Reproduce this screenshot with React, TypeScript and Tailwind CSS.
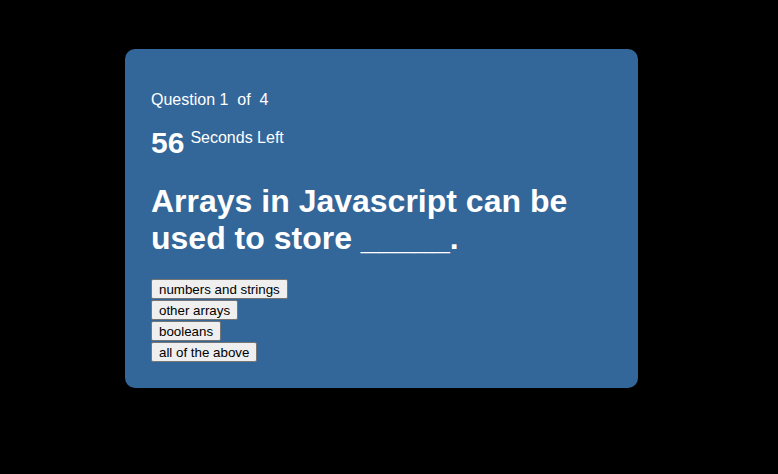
const choices = ['numbers and strings', 'other arrays', 'booleans', 'all of the above'];

export default function App() {
  return (
    <div className="min-h-[474px] bg-black pt-[49px] font-['Liberation_Sans',Arial,sans-serif] text-white">
      <div className="ml-[125px] w-[513px] rounded-[10px] bg-[#336699] px-[26px] pt-[42px] pb-[26px]">
        {/* Progress */}
        <p className="text-[16px] leading-[18px] whitespace-pre">Question 1  of  4</p>

        {/* Timer */}
        <div className="mt-[18px] flex items-start gap-[6px]">
          <span className="text-[30px] font-bold leading-[32px]">56</span>
          <span className="mt-[2px] text-[16px] leading-[18px]">Seconds Left</span>
        </div>

        {/* Question */}
        <h1 className="mt-[24px] text-[32px] font-bold leading-[37px]">
          Arrays in Javascript can be used to store _____.
        </h1>

        {/* Choices */}
        <div className="mt-[22px] flex flex-col items-start gap-[1px]">
          {choices.map((c) => (
            <button
              key={c}
              className="h-[20px] rounded-[2px] border border-[#767676] bg-[#efefef] px-[7px] text-[13.33px] leading-[15px] text-black"
            >
              {c}
            </button>
          ))}
        </div>
      </div>
    </div>
  );
}
